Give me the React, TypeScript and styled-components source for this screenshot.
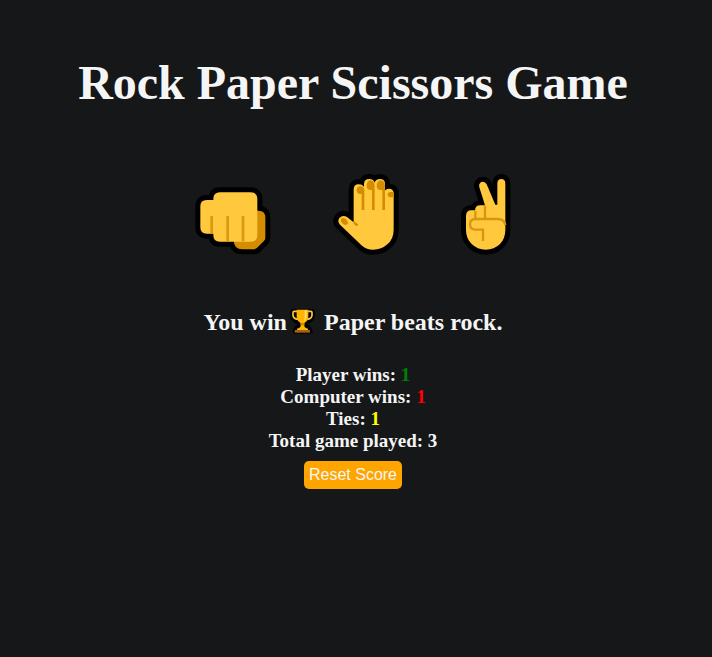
import React, { useState } from "react";
import styled, { createGlobalStyle } from "styled-components";

const GlobalStyle = createGlobalStyle`
  body {
    margin: 0;
    background: #151718;
    color: #f5f5f5;
    font-family: "Liberation Serif", "Times New Roman", serif;
  }
`;

const Page = styled.main`
  display: flex;
  flex-direction: column;
  align-items: center;
  padding: 55px 6px 24px 0;
`;

const Title = styled.h1`
  margin: 0;
  font-size: 48px;
  line-height: 56px;
  text-align: center;
`;

const Moves = styled.div`
  display: flex;
  align-items: flex-end;
  gap: 62px;
  margin-top: 63px;
`;

const MoveButton = styled.button`
  display: block;
  padding: 0;
  border: 0;
  background: transparent;
  cursor: pointer;

  svg {
    display: block;
  }
`;

const Result = styled.h2`
  display: flex;
  align-items: center;
  margin: 52px 0 0;
  font-size: 24px;
  line-height: 28px;
  white-space: pre;

  svg {
    margin: 0 9px 2px 3px;
  }
`;

const Scores = styled.div`
  margin-top: 28px;
  font-size: 19px;
  font-weight: bold;
  line-height: 22px;
  text-align: center;
`;

const ScoreLine = styled.div``;

const Count = styled.span<{ $color?: string }>`
  color: ${({ $color }) => $color ?? "inherit"};
`;

const ResetButton = styled.button`
  height: 28px;
  margin-top: 9px;
  padding: 0 5px;
  border: 0;
  border-radius: 5px;
  background: #ffa500;
  color: #f5f5f5;
  font-family: "Liberation Sans", Arial, sans-serif;
  font-size: 16px;
  line-height: 28px;
  cursor: pointer;
`;

const Outline = ({ children }: { children: React.ReactNode }) => (
  <g fill="#000" stroke="#000" strokeWidth="30" strokeLinejoin="round">
    {children}
  </g>
);

const fistHand =
  "M98 82H190Q210 82 210 102V210Q210 230 190 230H97Q78 230 78 210V206H58Q39 206 39 187V124Q39 105 58 105H78V102Q78 82 98 82Z";
const fistThumb = "M200 137H213Q234 137 234 158V218Q234 224 229 229L211 247Q206 253 197 253H166Q139 253 139 225Z";

const RockIcon = () => (
  <svg width="76" height="69" viewBox="23 63 228 207" aria-hidden="true">
    <Outline>
      <path d={fistHand} />
      <path d={fistThumb} />
    </Outline>
    <path d={fistThumb} fill="#d48c00" />
    <path d={fistHand} fill="#ffc83d" />
    <path d="M73 153V206M121 153V229M167 153V229" stroke="#d99a12" strokeWidth="8" />
  </svg>
);

const palm =
  "M93 74Q93 58 108 58Q119 58 124 65V57Q124 42 140 42Q153 42 156 53Q159 42 172 42Q187 42 187 57V76Q191 71 199 71Q213 71 213 86V194Q213 222 194 238Q177 254 151 254Q132 254 118 242L52 179Q43 170 50 159Q60 148 73 156L93 172Z";

const PaperIcon = () => (
  <svg width="66" height="81" viewBox="31 27 198 243" aria-hidden="true">
    <Outline>
      <path d={palm} />
    </Outline>
    <path d={palm} fill="#ffc83d" />
    <path d="M121 74V135M152 70V135M183 70V135" stroke="#d48c00" strokeWidth="8" />
    <g fill="#d48c00">
      <path d="M102 76Q102 64 113 64Q124 64 125 76Q125 87 113 87Q102 87 102 76Z" />
      <path d="M132 63Q132 48 143 46Q155 47 156 63Q156 75 144 75Q132 75 132 63Z" />
      <path d="M162 63Q162 48 174 46Q186 47 187 63Q187 75 175 75Q162 75 162 63Z" />
      <path d="M213 81V97Q195 98 195 89Q195 81 204 81Z" />
      <path d="M56 161Q61 156 69 162Q77 169 76 175Q70 184 61 176Q51 168 56 161Z" />
      <path d="M93 168L105 177Q109 182 101 183L93 177Z" />
    </g>
  </svg>
);

const peaceHand =
  "M88 67Q85 56 94 51Q105 48 110 58L136 119H142V56Q142 42 154 42Q166 42 166 56V194Q166 220 150 237Q133 254 107 254Q82 254 65 237Q48 220 48 195V153Q48 136 64 136H75Q76 121 90 121H105Z";

const ScissorsIcon = () => (
  <svg width="50" height="81" viewBox="33 27 150 243" aria-hidden="true">
    <Outline>
      <path d={peaceHand} />
    </Outline>
    <path d={peaceHand} fill="#ffc83d" />
    <path
      d="M76 137V159M105 122V160M166 180Q162 162 144 162H76Q60 162 60 178Q60 194 76 194H99V228"
      fill="none"
      stroke="#d99512"
      strokeWidth="7"
      strokeLinejoin="round"
    />
  </svg>
);

const TrophyIcon = () => (
  <svg width="25" height="27" viewBox="0 0 75 81" role="img" aria-label="Trophy">
    <g fill="#000" stroke="#000" strokeWidth="14" strokeLinejoin="round">
      <path d="M8 14H67V28Q63 41 51 45L43 51V61H55L61 73H15L21 61H32V51L24 45Q10 40 8 28Z" />
    </g>
    <path
      d="M21 13H12Q9 13 9 17V25Q10 35 24 37M54 13H63Q66 13 66 17V25Q65 35 51 37"
      fill="none"
      stroke="#ffc83d"
      strokeWidth="5"
    />
    <path d="M20 8H55V31Q53 43 43 48V58Q44 63 54 65V69H21V65Q31 63 32 58V48Q22 43 20 31Z" fill="#ffb600" />
    <path d="M44 10H50V31Q48 39 42 42Q44 36 44 29Z" fill="#ffe06b" />
    <path d="M32 48H43V55H32Z" fill="#d48c00" />
    <path d="M14 69H60V77H14Z" fill="#a65f16" />
  </svg>
);

const moves = [
  { name: "Rock", Icon: RockIcon },
  { name: "Paper", Icon: PaperIcon },
  { name: "Scissors", Icon: ScissorsIcon },
];

type Game = { result: string; outcome: string; player: number; computer: number; ties: number };

const App = () => {
  const [game, setGame] = useState<Game>({
    result: "You win",
    outcome: "Paper beats rock.",
    player: 1,
    computer: 1,
    ties: 1,
  });

  const play = (move: number) => {
    const other = Math.floor(Math.random() * 3);
    const diff = (move - other + 3) % 3;
    const winner = diff === 1 ? move : other;
    const loser = diff === 1 ? other : move;
    setGame({
      result: diff === 0 ? "Tie. " : diff === 1 ? "You win" : "You lose. ",
      outcome:
        diff === 0
          ? `Both chose ${moves[move].name.toLowerCase()}.`
          : `${moves[winner].name} beats ${moves[loser].name.toLowerCase()}.`,
      player: game.player + (diff === 1 ? 1 : 0),
      computer: game.computer + (diff === 2 ? 1 : 0),
      ties: game.ties + (diff === 0 ? 1 : 0),
    });
  };

  const reset = () => setGame({ result: "", outcome: "", player: 0, computer: 0, ties: 0 });

  return (
    <>
      <GlobalStyle />
      <Page>
        <Title>Rock Paper Scissors Game</Title>
        <Moves>
          {moves.map(({ name, Icon }, index) => (
            <MoveButton key={name} type="button" aria-label={name} onClick={() => play(index)}>
              <Icon />
            </MoveButton>
          ))}
        </Moves>
        <Result>
          <span>{game.result}</span>
          {game.result === "You win" && <TrophyIcon />}
          <span>{game.outcome}</span>
        </Result>
        <Scores>
          <ScoreLine>
            Player wins: <Count $color="green">{game.player}</Count>
          </ScoreLine>
          <ScoreLine>
            Computer wins: <Count $color="red">{game.computer}</Count>
          </ScoreLine>
          <ScoreLine>
            Ties: <Count $color="yellow">{game.ties}</Count>
          </ScoreLine>
          <ScoreLine>
            Total game played: <Count>{game.player + game.computer + game.ties}</Count>
          </ScoreLine>
        </Scores>
        <ResetButton type="button" onClick={reset}>
          Reset Score
        </ResetButton>
      </Page>
    </>
  );
};

export default App;
